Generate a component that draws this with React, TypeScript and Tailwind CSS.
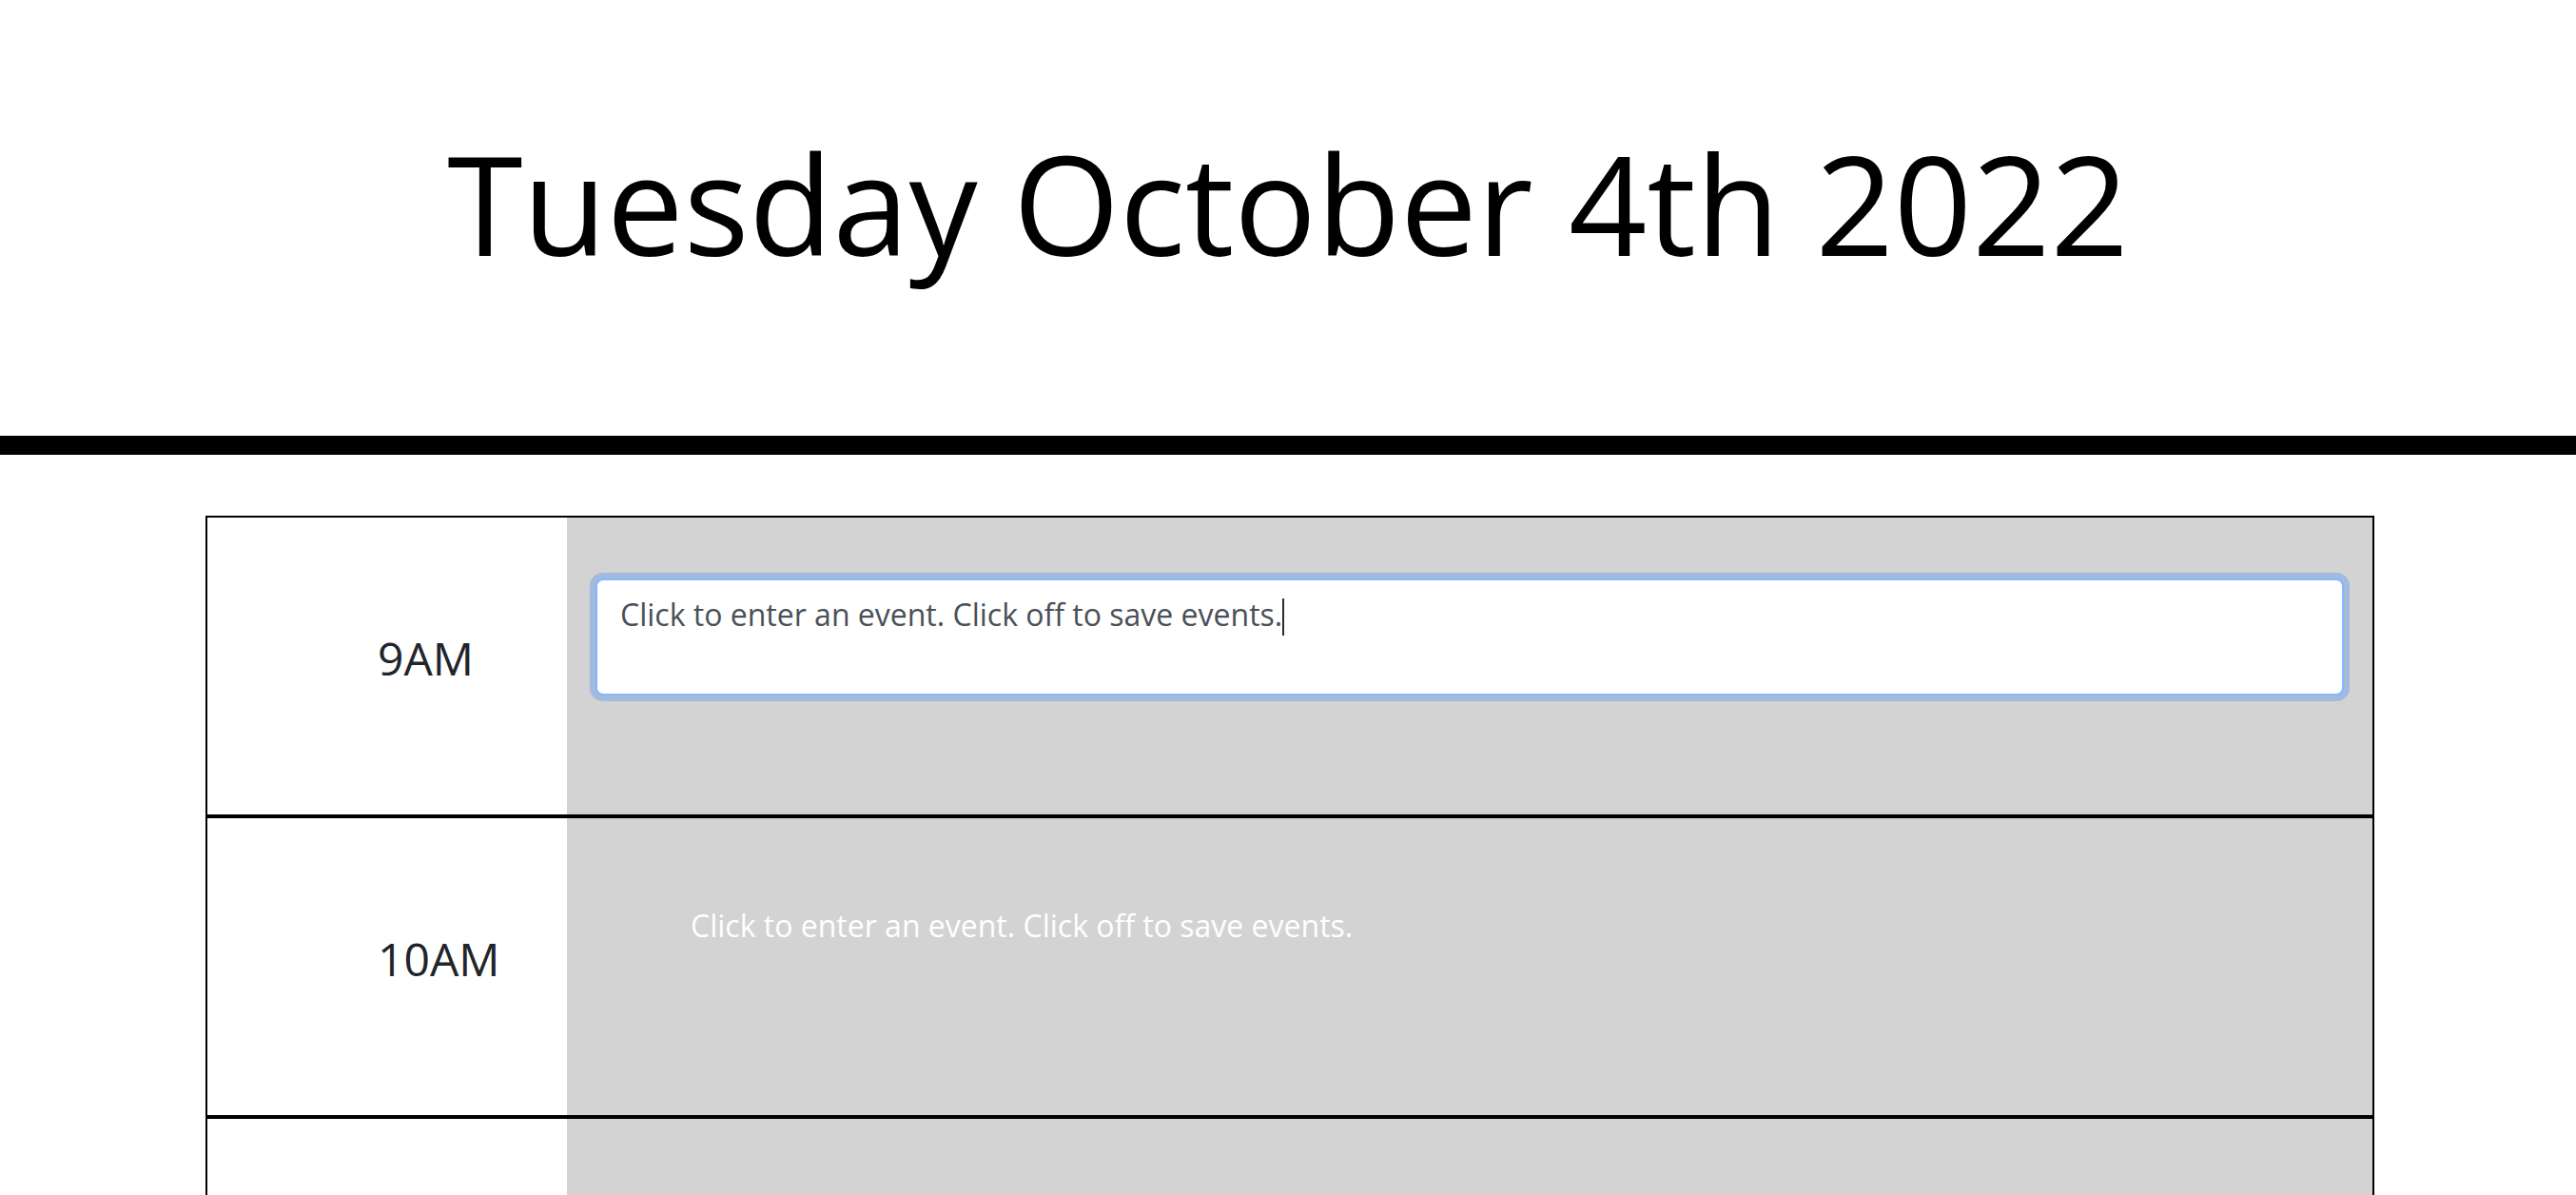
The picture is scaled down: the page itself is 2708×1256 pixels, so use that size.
const hours = ["9AM", "10AM", "11AM", "12PM", "1PM", "2PM", "3PM", "4PM", "5PM"];

function HourRow({ hour, active }: { hour: string; active?: boolean }) {
  return (
    <div className="flex h-[316px] border-2 border-black">
      <div className="w-[378px] shrink-0 flex items-center pl-[179px] pb-[17px] bg-white">
        <span className="text-[48px] leading-[1.5] text-[#212529]">{hour}</span>
      </div>
      <div className="flex-1 bg-[#d3d3d3]">
        {active ? (
          <div className="mx-[30px] mt-[64px] h-[123px] rounded-[8px] border-2 border-[#86b7fe] bg-white px-[24px] pt-[12px] text-[32px] leading-[1.5] text-[#495057] shadow-[0_0_0_6px_rgba(13,110,253,0.25)]">
            Click to enter an event. Click off to save events.
            <span className="inline-block w-[2px] h-[39px] align-[-10px] bg-[#2b2b2b]" />
          </div>
        ) : (
          <div className="pl-[130px] pt-[89px] text-[32px] leading-[1.5] text-white">
            Click to enter an event. Click off to save events.
          </div>
        )}
      </div>
    </div>
  );
}

export default function App() {
  return (
    <div className="min-h-screen bg-white font-['Open_Sans',sans-serif] text-black">
      <header className="pt-[105px] pb-[137px] text-center">
        <h1 className="text-[144px] leading-[1.5] font-normal">Tuesday October 4th 2022</h1>
      </header>
      <div className="h-[20px] bg-black" />
      <main className="ml-[216px] w-[2280px] mt-[64px]">
        {hours.map((h, i) => (
          <HourRow key={h} hour={h} active={i === 0} />
        ))}
      </main>
    </div>
  );
}
